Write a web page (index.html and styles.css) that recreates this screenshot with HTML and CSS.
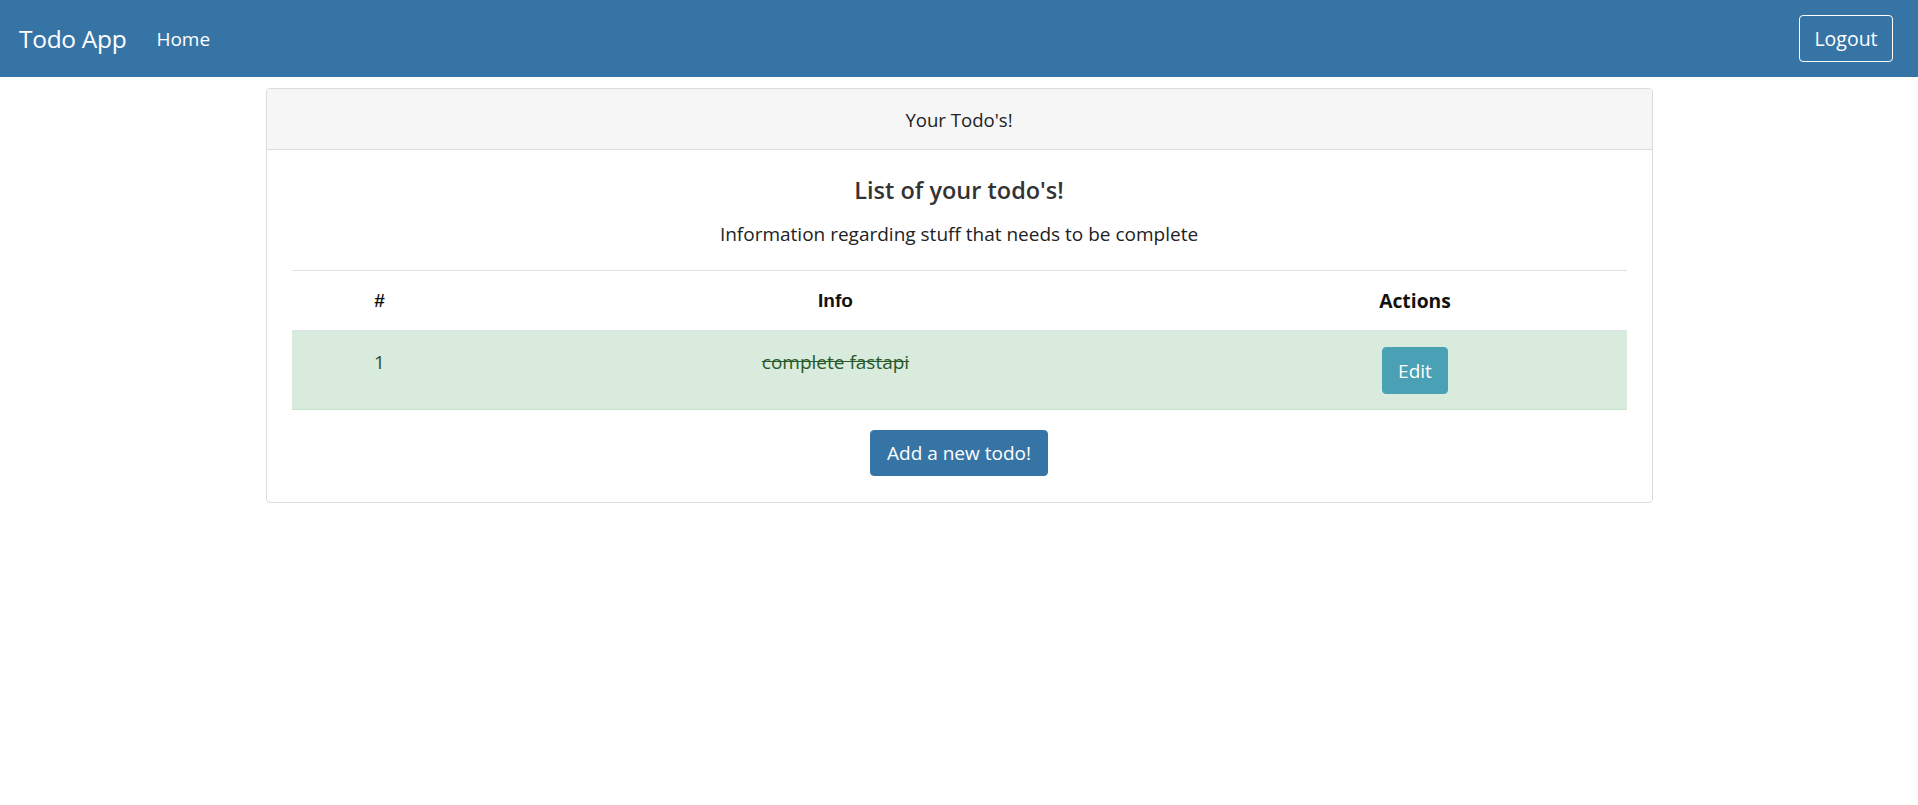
FILE: index.html
```html
<!DOCTYPE html>
<html lang="en">
<head>
<meta charset="utf-8">
<title>Todo App</title>
<link rel="stylesheet" href="styles.css">
</head>
<body>
<nav class="navbar">
  <a class="brand" href="#">Todo App</a>
  <a class="nav-link" href="#">Home</a>
  <span class="spacer"></span>
  <button class="btn-logout">Logout</button>
</nav>
<main class="container">
  <section class="card">
    <div class="card-header">Your Todo's!</div>
    <div class="card-body">
      <h5 class="card-title">List of your todo's!</h5>
      <p class="card-text">Information regarding stuff that needs to be complete</p>
      <table class="table">
        <thead>
          <tr>
            <th class="col-num narrow">#</th>
            <th class="col-info narrow">Info</th>
            <th class="col-actions">Actions</th>
          </tr>
        </thead>
        <tbody>
          <tr class="row-success">
            <td class="cell-num">1</td>
            <td class="cell-info"><s>complete fastapi</s></td>
            <td class="cell-actions"><button class="btn-edit">Edit</button></td>
          </tr>
        </tbody>
      </table>
      <div class="add-wrap"><button class="btn-add">Add a new todo!</button></div>
    </div>
  </section>
</main>
</body>
</html>
```
FILE: styles.css
```css
* { box-sizing: border-box; }
html, body { margin: 0; padding: 0; }
body {
  font-family: "Open Sans", "Noto Sans", sans-serif;
  color: #212529;
  background: #fff;
}
.navbar {
  height: 77px;
  background: #3674a5;
  display: flex;
  align-items: center;
  padding: 0 25px 0 19px;
}
.brand {
  color: #fff;
  text-decoration: none;
  font-size: 24.5px;
  margin-right: 30px;
  letter-spacing: -0.3px;
}
.nav-link {
  color: #fff;
  text-decoration: none;
  font-size: 19px;
}
.spacer { flex: 1; }
.btn-logout {
  font-family: inherit;
  font-size: 19.5px;
  color: #fff;
  background: transparent;
  border: 1px solid #fff;
  border-radius: 4px;
  width: 94px;
  height: 47px;
  padding: 0;
}
.container {
  display: flex;
  justify-content: center;
  padding-top: 11px;
}
.card {
  width: 1387px;
  border: 1px solid #dcdcdc;
  border-radius: 4px;
  overflow: hidden;
}
.card-header {
  height: 61px;
  background: #f6f6f6;
  border-bottom: 1px solid #dcdcdc;
  display: flex;
  align-items: center;
  justify-content: center;
  font-size: 18.6px;
  color: #222;
}
.card-body {
  padding: 25px 25px 26px;
  text-align: center;
}
.card-title {
  margin: 0;
  font-size: 23.5px;
  font-weight: 600;
  color: #333;
  line-height: 30px;
}
.card-text {
  margin: 16px 0 0;
  font-size: 19px;
  line-height: 26px;
  color: #222;
}
.table {
  width: 100%;
  border-collapse: collapse;
  margin-top: 23px;
}
.table th {
  border-top: 1px solid #dee2e6;
  height: 60px;
  font-size: 19.3px;
  font-weight: 700;
  color: #111;
  vertical-align: middle;
}
.table th.narrow {
  font-family: "Liberation Sans Narrow", "Liberation Sans", sans-serif;
  font-size: 19px;
}
.col-num { width: 176px; }
.col-info { width: 736px; }
.row-success td {
  background: #d9ebdc;
  border-top: 1px solid #dee2e6;
  border-bottom: 1px solid #c6e2cb;
  height: 79px;
  vertical-align: top;
  font-size: 19px;
  color: #2c4e2c;
  padding-top: 18px;
}
.cell-info s { color: #2b5a2b; }
.row-success td.cell-actions { padding-top: 16px; }
.btn-edit {
  font-family: inherit;
  font-size: 19px;
  color: #fff;
  background: #4aa0b5;
  border: 1px solid #4aa0b5;
  border-radius: 4px;
  width: 66px;
  height: 47px;
  padding: 0;
}
.add-wrap {
  display: flex;
  justify-content: center;
  margin-top: 20px;
}
.btn-add {
  font-family: inherit;
  font-size: 19px;
  color: #fff;
  background: #3674a5;
  border: 1px solid #3674a5;
  border-radius: 4px;
  width: 178px;
  height: 46px;
  padding: 0;
}
```
